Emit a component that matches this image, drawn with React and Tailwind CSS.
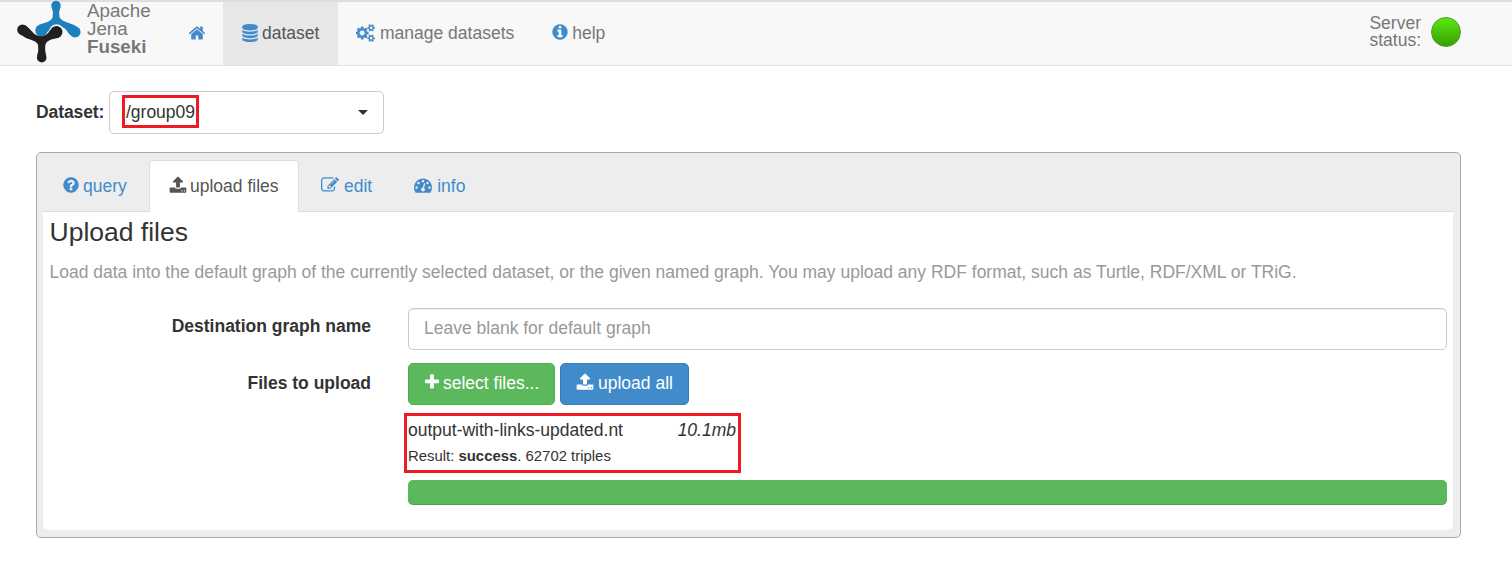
const CIRCLE = "q0 209-103 385.5t-279.5 279.5-385.5 103-385.5-103-279.5-279.5-103-385.5 103-385.5 279.5-279.5 385.5-103 385.5 103 279.5 279.5 103 385.5z";
const DOT = "q0-53-37.5-90.5t-90.5-37.5-90.5 37.5-37.5 90.5 37.5 90.5 90.5 37.5 90.5-37.5 37.5-90.5z";
const DISK = "q237 0 443-43t325-127v170q0 69-103 128t-280 93.5-385 34.5-385-34.5-280-93.5-103-128v-170q119 84 325 127t443 43z";
const SMALL_COG = "v140q0 16-149 31-12 27-30 52 51 113 51 138 0 4-4 7-122 71-124 71-8 0-46-47t-52-68q-20 2-30 2t-30-2q-14 21-52 68t-46 47q-2 0-124-71-4-3-4-7 0-25 51-138-18-25-30-52-149-15-149-31v-140q0-16 149-31 13-29 30-52-51-113-51-138 0-4 4-7 4-2 35-20t59-34 30-16q8 0 46 46.5t52 67.5q20-2 30-2t30 2q51-71 92-112l6-2q4 0 124 70 4 3 4 7 0 25-51 138 17 23 30 52 149 15 149 31z";

const PATHS = {
  home: "M1472 992v480q0 26-19 45t-45 19h-384v-384h-256v384h-384q-26 0-45-19t-19-45v-480q0-1 .5-3t.5-3l575-474 575 474q1 2 1 6zm223-69l-62 74q-8 9-21 11h-3q-13 0-21-7l-692-577-692 577q-12 8-24 7-13-2-21-11l-62-74q-8-10-7-23.5t11-21.5l719-599q32-26 76-26t76 26l244 204v-195q0-14 9-23t23-9h192q14 0 23 9t9 23v408l219 182q10 8 11 21.5t-7 23.5z",
  info: "M1152 1376v-160q0-14-9-23t-23-9h-96v-512q0-14-9-23t-23-9h-320q-14 0-23 9t-9 23v160q0 14 9 23t23 9h96v320h-96q-14 0-23 9t-9 23v160q0 14 9 23t23 9h448q14 0 23-9t9-23zm-128-896v-160q0-14-9-23t-23-9h-192q-14 0-23 9t-9 23v160q0 14 9 23t23 9h192q14 0 23-9t9-23zm640 416" + CIRCLE,
  question: "M1024 1376v-192q0-14-9-23t-23-9h-192q-14 0-23 9t-9 23v192q0 14 9 23t23 9h192q14 0 23-9t9-23zm256-672q0-88-55.5-163t-138.5-116-170-41q-243 0-371 213-15 24 8 42l132 100q7 6 19 6 16 0 25-12 53-68 86-92 34-24 86-24 48 0 85.5 26t37.5 59q0 38-20 61t-68 45q-63 28-115.5 86.5t-52.5 125.5v36q0 14 9 23t23 9h192q14 0 23-9t9-23q0-19 21.5-49.5t54.5-49.5q32-18 49-28.5t46-35 44.5-48 28-60.5 12.5-81zm384 192" + CIRCLE,
  upload: "M1344 1472q0-26-19-45t-45-19-45 19-19 45 19 45 45 19 45-19 19-45zm256 0q0-26-19-45t-45-19-45 19-19 45 19 45 45 19 45-19 19-45zm128-224v320q0 40-28 68t-68 28h-1472q-40 0-68-28t-28-68v-320q0-40 28-68t68-28h427q21 56 70.5 92t110.5 36h256q61 0 110.5-36t70.5-92h427q40 0 68 28t28 68zm-325-648q-17 40-59 40h-256v448q0 26-19 45t-45 19h-256q-26 0-45-19t-19-45v-448h-256q-42 0-59-40-17-39 14-69l448-448q18-19 45-19t45 19l448 448q31 30 14 69z",
  plus: "M1600 736v192q0 40-28 68t-68 28h-416v416q0 40-28 68t-68 28h-192q-40 0-68-28t-28-68v-416h-416q-40 0-68-28t-28-68v-192q0-40 28-68t68-28h416v-416q0-40 28-68t68-28h192q40 0 68 28t28 68v416h416q40 0 68 28t28 68z",
  edit: "M888 1184l116-116-152-152-116 116v56h96v96h56zm440-720q-16-16-33 1l-350 350q-17 17-1 33t33-1l350-350q17-17 1-33zm80 594v190q0 119-84.5 203.5t-203.5 84.5h-832q-119 0-203.5-84.5t-84.5-203.5v-832q0-119 84.5-203.5t203.5-84.5h832q63 0 117 25 15 7 18 23 3 17-9 29l-49 49q-14 14-32 8-23-6-45-6h-832q-66 0-113 47t-47 113v832q0 66 47 113t113 47h832q66 0 113-47t47-113v-126q0-13 9-22l64-64q15-15 35-7t20 29zm-96-738l288 288-672 672h-288v-288zm444 132l-92 92-288-288 92-92q28-28 68-28t68 28l152 152q28 28 28 68t-28 68z",
  database: "M896 768" + DISK + "m0 768" + DISK + "m0-384" + DISK + "m0-1152q208 0 385 34.5t280 93.5 103 128v128q0 69-103 128t-280 93.5-385 34.5-385-34.5-280-93.5-103-128v-128q0-69 103-128t280-93.5 385-34.5z",
  gauge: "M384 1152" + DOT + "m192-448" + DOT + "m428 481l101-382q6-26-7.5-48.5t-38.5-29.5-48 6.5-30 39.5l-101 382q-60 5-107 43.5t-63 98.5q-20 77 20 146t117 89 146-20 89-117q16-60-6-117t-72-91zm660-33" + DOT + "m-640-640" + DOT + "m448 192" + DOT + "m320 448q0 261-141 483-19 29-54 29h-1402q-35 0-54-29-141-221-141-483 0-182 71-348t191-286 286-191 348-71 348 71 286 191 191 286 71 348z",
  cogs: "M832 896q0-106-75-181t-181-75-181 75-75 181 75 181 181 75 181-75 75-181zm768 512q0-52-38-90t-90-38-90 38-38 90q0 53 37.5 90.5t90.5 37.5 90.5-37.5 37.5-90.5zm0-1024q0-52-38-90t-90-38-90 38-38 90q0 53 37.5 90.5t90.5 37.5 90.5-37.5 37.5-90.5zm-384 421v185q0 10-7 19.5t-16 10.5l-155 24q-11 35-32 76 34 48 90 115 7 11 7 20 0 12-7 19-23 30-82.5 89.5t-78.5 59.5q-11 0-21-7l-115-90q-37 19-77 31-11 108-23 155-7 24-30 24h-186q-11 0-20-7.5t-10-17.5l-23-153q-34-10-75-31l-118 89q-7 7-20 7-11 0-21-8-144-133-144-160 0-9 7-19 10-14 41-53t47-61q-23-44-35-82l-152-24q-10-1-17-9.5t-7-19.5v-185q0-10 7-19.5t16-10.5l155-24q11-35 32-76-34-48-90-115-7-11-7-20 0-12 7-20 22-30 82-89t79-59q11 0 21 7l115 90q34-18 77-32 11-108 23-154 7-24 30-24h186q11 0 20 7.5t10 17.5l23 153q34 10 75 31l118-89q8-7 20-7 11 0 21 8 144 133 144 160 0 8-7 19-12 16-42 54t-45 60q23 48 34 82l152 23q10 2 17 10.5t7 19.5zm640 533" + SMALL_COG + "m0-1024" + SMALL_COG,
};

function Icon({ name, viewBox = "0 0 1792 1792", className }) {
  return (
    <svg viewBox={viewBox} className={"shrink-0 fill-current " + className} aria-hidden="true">
      <path d={PATHS[name]} />
    </svg>
  );
}

function Logo() {
  return (
    <svg viewBox="0 0 64 64" className="h-16 w-16 shrink-0" aria-hidden="true">
      <g fill="#1c81bd">
        <circle cx="39" cy="5.500" r="4.700" />
        <circle cx="24.300" cy="30.500" r="6" />
        <circle cx="58.200" cy="32" r="5.400" />
        <path d="M34.600 7Q36.700 12 35.700 17Q34.500 20.500 29 22.500Q25 23.500 21.500 25L27.500 35.600Q31 30 39 26.500Q46 25.500 50 31Q52 35 55.500 36.700L61 27.400Q57 24.500 51 22.800Q44 20.500 42.500 17Q41.300 12 43.500 7Z" />
      </g>
      <circle cx="39.500" cy="31.700" r="7.500" fill="#f8f8f8" />
      <g fill="#231f20">
        <circle cx="5.500" cy="29.800" r="5.300" />
        <circle cx="39.500" cy="32" r="6" />
        <circle cx="24.700" cy="57.700" r="4.800" />
        <path d="M8 25.200Q12 27.500 15 31.500Q19 36.500 25 36.300Q30 35.500 32.500 31L36 27L42 37.400Q39 38.500 35 39.300Q29.500 41 28.300 45Q27.500 50 29.200 56H20.200Q22 50 21 45Q20 41.500 14.500 40Q7.500 38 3 34.300Z" />
      </g>
    </svg>
  );
}

export default function App() {
  return (
    <div className="h-[561px] w-[1512px] overflow-hidden bg-white font-['Liberation_Sans',Arial,sans-serif] text-[17.5px] leading-[25px] text-[#333]">
      <header className="flex h-[66px] border-t-2 border-b border-t-[#dedee2] border-b-[#e2e2e2] bg-[#f8f8f8] text-[#777]">
        <div className="-mt-0.5 flex w-[171px] pl-[17px]">
          <Logo />
          <div className="ml-[6px] pt-[2px] text-[18.75px] leading-[18px]">
            <div>Apache</div>
            <div>Jena</div>
            <div className="font-bold">Fuseki</div>
          </div>
        </div>
        <nav className="flex">
          <a className="flex w-[52px] items-center justify-center pr-px text-[#428bca]"><Icon name="home" className="mb-[2px] size-[18px]" /></a>
          <a className="flex w-[115px] items-center bg-[#e7e7e7] pl-[18px] text-[#555]">
            <Icon name="database" className="mb-[2px] size-[18px] text-[#428bca]" /><span className="ml-[3px]">dataset</span>
          </a>
          <a className="flex items-center pl-[18px]">
            <Icon name="cogs" viewBox="0 0 1920 1792" className="mb-[2px] h-[18px] w-[20px] text-[#428bca]" /><span className="ml-[4px]">manage datasets</span>
          </a>
          <a className="flex items-center pl-[37px]">
            <Icon name="info" className="mb-[3px] size-[18px] text-[#428bca]" /><span className="ml-[3px]">help</span>
          </a>
        </nav>
        <div className="ml-auto flex items-center pr-[51px] pb-[3px]">
          <div className="leading-[17.5px]">Server<br />status:</div>
          <div className="ml-[10px] size-[30px] rounded-full border border-[#4d9a2e] bg-linear-to-b from-[#5ae811] to-[#38a003]" />
        </div>
      </header>

      <main className="pl-9">
        <div className="mt-[25px] flex h-[43px] items-center">
          <span className="w-[73px] font-bold tracking-[-0.1px]">Dataset:</span>
          <button className="flex h-[43px] w-[275px] items-center rounded-[5px] border border-[#ccc] pr-[15px] pl-[12px]">
            <span className="-mt-[2px] flex h-[33px] w-[77px] items-center justify-center border-3 border-[#ed1c24] pt-[2px]">/group09</span>
            <span className="ml-auto border-x-5 border-t-5 border-x-transparent border-t-[#333]" />
          </button>
        </div>

        <section className="mt-[18px] h-[386px] w-[1425px] rounded-[5px] border border-[#a9a9a9] bg-[#ededed] pt-[7px] pr-[7px] pl-[6px]">
          <div className="flex h-[52px] border-b border-[#ddd] text-[#428bca]">
            <a className="flex w-[106px] items-center pt-px pl-[19px]"><Icon name="question" className="mb-[2px] size-[18px]" /><span className="ml-[3px]">query</span></a>
            <a className="flex h-[52px] w-[150px] items-center rounded-t-[5px] border border-b-0 border-[#ddd] bg-white pl-[19px] text-[#555]"><Icon name="upload" className="mb-[3px] size-[18px]" /><span className="ml-[3px]">upload files</span></a>
            <a className="flex items-center pt-px pl-[22px]"><Icon name="edit" className="mb-[2px] size-[18px]" /><span className="ml-[5px]">edit</span></a>
            <a className="flex items-center pt-px pl-[42px]"><Icon name="gauge" className="mb-[2px] size-[18px]" /><span className="ml-[5px]">info</span></a>
          </div>
          <div className="h-[318px] rounded-b-[5px] bg-white pr-[6px] pl-[7px]">
            <h1 className="-ml-[0.5px] pt-[4px] text-[26.5px] leading-[32px]">Upload files</h1>
            <p className="mt-[12px] -ml-[0.5px] text-[#999]">Load data into the default graph of the currently selected dataset, or the given named graph. You may upload any RDF format, such as Turtle, RDF/XML or TRiG.</p>
            <div className="mt-[23px] flex h-[42px]">
              <label className="mt-[6px] mr-[37px] w-[321px] text-right font-bold">Destination graph name</label>
              <div className="flex-1 rounded-[5px] border border-[#ccc] pt-[7px] pl-[15px] text-[#999] shadow-[inset_0_1px_1px_rgba(0,0,0,0.075)]">Leave blank for default graph</div>
            </div>
            <div className="mt-[13px] flex h-[42px]">
              <span className="mt-[8px] mr-[37px] w-[321px] text-right font-bold">Files to upload</span>
              <button className="flex w-[147px] items-center rounded-[5px] border border-[#4cae4c] bg-[#5cb85c] pb-[2px] pl-[14px] text-white"><Icon name="plus" className="mb-[2px] size-[18px]" /><span className="ml-[2px]">select files...</span></button>
              <button className="ml-[5px] flex w-[129px] items-center rounded-[5px] border border-[#357ebd] bg-[#428bca] pb-[2px] pl-[15px] text-white"><Icon name="upload" className="mb-[2px] size-[18px]" /><span className="ml-[4px]">upload all</span></button>
            </div>
            <div className="mt-[8px] ml-[354px] h-[60px] w-[337px] border-3 border-[#ed1c24] pr-[2px] pl-[1px]">
              <div className="mt-[2px] flex justify-between"><span>output-with-links-updated.nt</span><em>10.1mb</em></div>
              <div className="mt-px text-[14.9px]">Result: <b>success</b>. 62702 triples</div>
            </div>
            <div className="mt-[7px] ml-[358px] h-[25px] rounded-[5px] bg-[#5cb85c] shadow-[inset_0_-1px_0_rgba(0,0,0,0.15)]" />
          </div>
        </section>
      </main>
    </div>
  );
}
